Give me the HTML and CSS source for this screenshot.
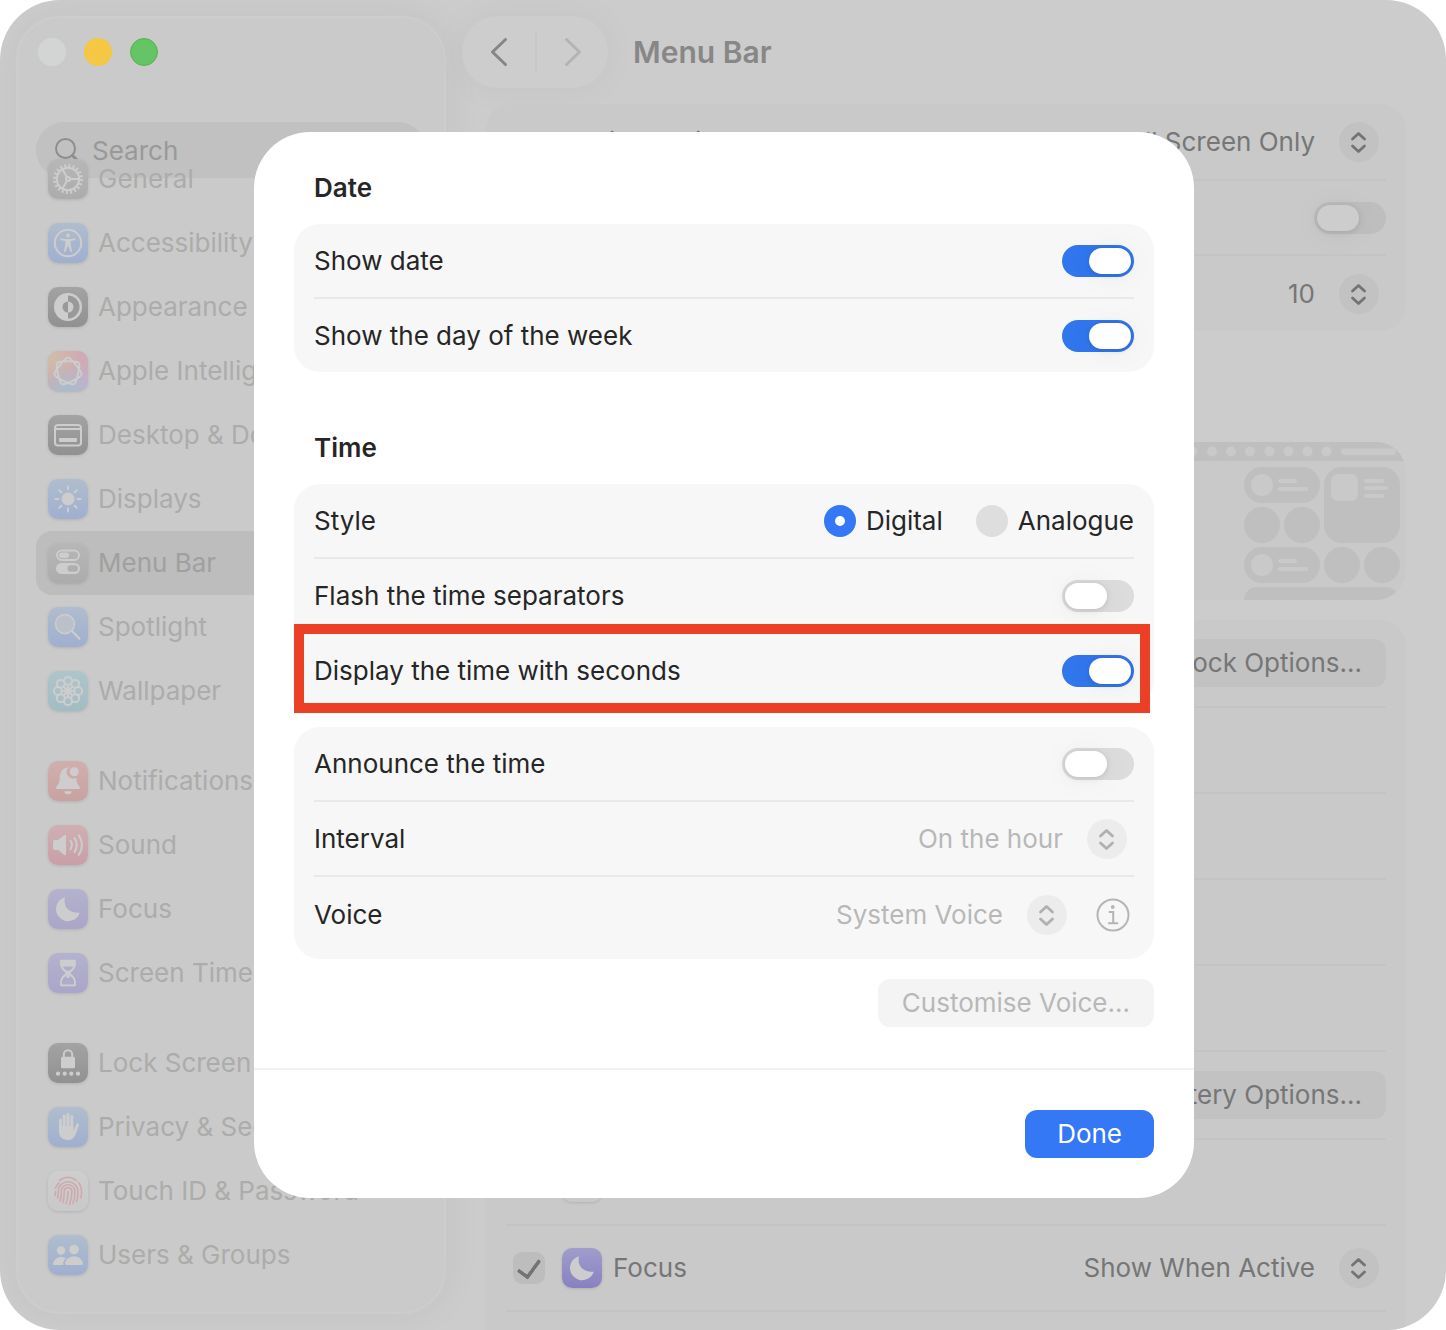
FILE: index.html
```html
<!DOCTYPE html>
<html lang="en">

<head>
    <meta charset="UTF-8">
    <title>Menu Bar</title>
    <link rel="stylesheet" href="styles.css">
</head>

<body>
    <svg class="defs" width="0" height="0" aria-hidden="true">
        <symbol id="updown" viewBox="0 0 40 40">
            <circle class="disc" cx="20" cy="20" r="20" />
            <path class="line" d="M13.5 17 19.5 11.5 25.500 17M13.500 24 19.500 29.500 25.500 24" />
        </symbol>
        <symbol id="moon" viewBox="0 0 40 40">
            <path d="M17 8.200C15.200 15 18.500 24.500 31.800 23.800A12.200 12.200 0 1 1 17 8.200Z" />
        </symbol>
    </svg>
    <div class="window">
        <aside class="sidebar">
            <div class="lights">
                <button type="button" class="light close" aria-label="Close"></button>
                <button type="button" class="light minimise" aria-label="Minimise"></button>
                <button type="button" class="light zoom" aria-label="Zoom"></button>
            </div>
            <div class="search">
                <svg width="26" height="26" viewBox="0 0 26 26"><circle cx="10.500" cy="10.500" r="9.500" /><path d="M17.500 17.500 24.500 24.500" /></svg>
                <input type="search" placeholder="Search" aria-label="Search">
            </div>
            <nav class="menu">
                <ul>
                    <li><a href="#">
                        <svg class="icon gray" viewBox="0 0 40 40">
                            <circle class="s" cx="20" cy="20" r="11.200" />
                            <circle class="s teeth" cx="20" cy="20" r="13.500" stroke-dasharray="2 2.240" />
                            <circle class="s" cx="20" cy="20" r="2" />
                            <path class="s" d="M22 20h9M19 18.300 14.500 10.500M19 21.700 14.500 29.500" />
                        </svg>General</a></li>
                    <li><a href="#">
                        <svg class="icon blue" viewBox="0 0 40 40">
                            <circle class="s" cx="20" cy="20" r="13.200" />
                            <circle cx="20" cy="12.500" r="2" />
                            <path d="M12.500 15.300 18 16h4l5.500-.700.200 1.600-5 1v4l1.500 6.800-1.600.400L20.300 23h-.600l-2.300 6.100-1.600-.400 1.500-6.800v-4l-5-1Z" />
                        </svg>Accessibility</a></li>
                    <li><a href="#">
                        <svg class="icon dark" viewBox="0 0 40 40">
                            <circle cx="20" cy="20" r="14" />
                            <path class="hole" d="M20 8.500a11.500 11.500 0 0 1 0 23V25.500a5.500 5.500 0 0 0 0-11ZM20 14.500a5.500 5.500 0 0 0 0 11Z" />
                        </svg>Appearance</a></li>
                    <li><a href="#">
                        <svg class="icon rainbow" viewBox="0 0 40 40">
                            <path class="s" d="M11.950 14.100C20 4 20 4 28.050 14.100S36.100 24.200 24.450 29.800 12.800 35.400 9.950 22.800 7.100 10.200 20 10.200 32.900 10.200 30.050 22.800 27.200 35.400 15.550 29.800 3.900 24.200 11.950 14.100Z" />
                        </svg>Apple Intelligence</a></li>
                    <li><a href="#">
                        <svg class="icon dark" viewBox="0 0 40 40">
                            <rect class="s" x="7" y="10" width="26" height="20.500" rx="3" />
                            <path class="s" d="M7.500 14h25" />
                            <rect x="11" y="23" width="18" height="4" rx="1" />
                        </svg>Desktop &amp; Dock</a></li>
                    <li><a href="#">
                        <svg class="icon blue" viewBox="0 0 40 40">
                            <circle cx="20" cy="20" r="6.500" />
                            <path class="s" d="M20 7.500v3M20 29.500v3M7.500 20h3M29.500 20h3M11.200 11.200l2.100 2.100M26.700 26.700l2.100 2.100M11.200 28.800l2.100-2.100M26.700 13.300l2.100-2.100" />
                        </svg>Displays</a></li>
                    <li><a href="#" class="current">
                        <svg class="icon gray" viewBox="0 0 40 40">
                            <rect class="s" x="9" y="7.500" width="22" height="9.500" rx="4.750" />
                            <rect x="11" y="9.500" width="10" height="5.500" rx="2.750" />
                            <rect x="8" y="20" width="24" height="11" rx="5.500" />
                            <rect class="hole" x="19.500" y="22.200" width="10.500" height="6.600" rx="3.300" />
                        </svg>Menu Bar</a></li>
                    <li><a href="#">
                        <svg class="icon blue" viewBox="0 0 40 40">
                            <circle class="lens" cx="17" cy="17" r="9.500" />
                            <path class="s" d="M24.500 24.500 31.500 31.800" />
                        </svg>Spotlight</a></li>
                    <li><a href="#">
                        <svg class="icon teal" viewBox="0 0 40 40">
                            <g class="s">
                                <circle cx="20" cy="9.800" r="3.900" /><circle cx="27.200" cy="12.800" r="3.900" />
                                <circle cx="30.200" cy="20" r="3.900" /><circle cx="27.200" cy="27.200" r="3.900" />
                                <circle cx="20" cy="30.200" r="3.900" /><circle cx="12.800" cy="27.200" r="3.900" />
                                <circle cx="9.800" cy="20" r="3.900" /><circle cx="12.800" cy="12.800" r="3.900" />
                                <circle cx="20" cy="20" r="2.500" />
                                <path d="M20 14v12M14 20h12M15.700 15.700l8.600 8.600M15.700 24.300l8.600-8.600" />
                            </g>
                        </svg>Wallpaper</a></li>
                </ul>
                <ul>
                    <li><a href="#">
                        <svg class="icon red" viewBox="0 0 40 40">
                            <path d="M20.500 6.500a6.500 6.500 0 0 0 7.800 10.200c.200 5 1.200 6.300 3.200 8.800 1 1.300.500 2.500-1 2.500h-21c-1.500 0-2-1.200-1-2.500 2.500-3 3-4.500 3.200-9 .300-5.500 3.300-10.300 8.800-10ZM16.300 30.300h7.400a3.700 3 0 0 1-7.400 0Z" />
                            <circle cx="26.300" cy="10.800" r="4.500" />
                        </svg>Notifications</a></li>
                    <li><a href="#">
                        <svg class="icon pink" viewBox="0 0 40 40">
                            <path d="M5 17q0-2 2-2h3l6-4.800q2-1.200 2 .800v18q0 2-2 .800L10 25H7q-2 0-2-2Z" />
                            <path class="s" d="M22.500 15.800q2.800 4.200 0 8.400M26.500 13q4.500 7 0 14M30.800 10.200q6.400 9.800 0 19.600" />
                        </svg>Sound</a></li>
                    <li><a href="#">
                        <svg class="icon purple" viewBox="0 0 40 40"><use href="#moon" /></svg>Focus</a></li>
                    <li><a href="#">
                        <svg class="icon purple" viewBox="0 0 40 40">
                            <path class="s" d="M13 7.800h14c.500 6.500-1.500 8-5.200 11v2.400c3.700 3 5.700 4.500 5.200 11H13c-.500-6.500 1.500-8 5.200-11v-2.400c-3.700-3-5.700-4.500-5.200-11Z" />
                            <path d="M13 7h14v6.800H13ZM18.500 17h3v8h-3Z" />
                            <path class="hole" d="M15.800 13.800h8.400L20 18.200ZM14.500 31.200q0-2.200 5.500-5.700 5.500 3.500 5.500 5.700Z" />
                        </svg>Screen Time</a></li>
                </ul>
                <ul>
                    <li><a href="#">
                        <svg class="icon dark" viewBox="0 0 40 40">
                            <rect x="13" y="13.800" width="14" height="11.400" rx="1.500" />
                            <path class="s" d="M15.800 14v-2.500a4.200 4.200 0 0 1 8.400 0V14" />
                            <circle cx="10" cy="30.700" r="2.100" /><circle cx="16.700" cy="30.700" r="2.100" />
                            <circle cx="23.300" cy="30.700" r="2.100" /><circle cx="30" cy="30.700" r="2.100" />
                        </svg>Lock Screen</a></li>
                    <li><a href="#">
                        <svg class="icon blue" viewBox="0 0 40 40">
                            <path class="hand" d="M12.500 24V13M16.200 19V9M20 19V7.500M23.800 19V9.500M27 24.500 29.500 18" />
                            <path d="M11 18.500 15 19h10.500v4.500l2.500-3 1.500 1C27.500 28 26.500 33 20 33c-6 0-9-3.500-9-9Z" />
                        </svg>Privacy &amp; Security</a></li>
                    <li><a href="#">
                        <svg class="icon white" viewBox="0 0 40 40">
                            <path class="print" d="M11.500 9.500q8.500-6.500 17 0M7.500 17q1.500-3.500 3.500-5M30.500 11.500q3.500 4 3 11.500-.200 2.500-1 4M7 24.500q.500-2 .500-4M9.500 27q1-2.500.800-6.500c.200-13 19.500-13 19.700.5q0 5-1.500 9.500M12 30q1.500-4.500 1.200-9.500c.300-9 13.500-9 13.700.5q.100 6-2 11.300M14.800 31.500Q16.500 26 16.200 20.500c.200-5 7.500-5 7.700.5q0 6-2.400 12.500M18 32.500Q20.200 27 20 20.500" />
                        </svg>Touch ID &amp; Password</a></li>
                    <li><a href="#">
                        <svg class="icon blue" viewBox="0 0 40 40">
                            <circle cx="13" cy="15.500" r="4.200" /><circle cx="26" cy="14.500" r="4.800" />
                            <path d="M15.500 30H6q-1.500 0-1-1.800C6.500 24 9.500 22 13 22q2.500 0 4.800 1.200C15.500 25.500 14.800 28 15.500 30ZM18.500 30q-2 0-1.500-2C18 24 21.500 21.500 26 21.500s8 2.500 9 6.500q.500 2-1.500 2Z" />
                        </svg>Users &amp; Groups</a></li>
                </ul>
            </nav>
        </aside>

        <main class="content">
            <header class="toolbar">
                <div class="history">
                    <button type="button" aria-label="Back"><svg width="18" height="30" viewBox="0 0 18 30"><path d="M15.500 2.500 2.500 15 15.500 27.500" /></svg></button>
                    <button type="button" aria-label="Forward" disabled><svg width="18" height="30" viewBox="0 0 18 30"><path d="M2.500 2.500 15.500 15 2.500 27.500" /></svg></button>
                </div>
                <h1>Menu Bar</h1>
            </header>

            <section class="card general">
                <div class="row">
                    <label for="autohide">Automatically hide and show the menu bar</label>
                    <span class="popup">
                        <select id="autohide"><option>In Full Screen Only</option></select>
                        <svg width="40" height="40"><use href="#updown" /></svg>
                    </span>
                </div>
                <div class="row end">
                    <input type="checkbox" class="switch" aria-label="Show menu bar background">
                </div>
                <div class="row end">
                    <span class="popup">
                        <select aria-label="Recent items"><option>10</option></select>
                        <svg width="40" height="40"><use href="#updown" /></svg>
                    </span>
                </div>
            </section>

            <div class="preview">
                <svg width="220" height="158" viewBox="0 0 220 158">
                    <g class="lighter">
                        <circle cx="6.500" cy="9.500" r="5" /><circle cx="26" cy="9.500" r="5" /><circle cx="45" cy="9.500" r="5" />
                        <circle cx="64" cy="9.500" r="5" /><circle cx="83.500" cy="9.500" r="5" /><circle cx="102.500" cy="9.500" r="5" />
                        <circle cx="121.500" cy="9.500" r="5" /><circle cx="140.500" cy="9.500" r="5" />
                        <rect x="155" y="6.500" width="55" height="6.500" rx="3.250" />
                    </g>
                    <g class="darker">
                        <rect x="58" y="25" width="76" height="36" rx="18" /><rect x="138" y="25" width="76" height="76" rx="18" />
                        <circle cx="76" cy="83" r="18" /><circle cx="116" cy="83" r="18" />
                        <rect x="58" y="105" width="76" height="36" rx="18" />
                        <circle cx="156" cy="123" r="18" /><circle cx="196" cy="123" r="18" />
                        <rect x="58" y="145" width="155" height="30" rx="13" />
                    </g>
                    <g class="lighter">
                        <circle cx="76" cy="43" r="11" /><rect x="92" y="37" width="19" height="4" rx="2" /><rect x="92" y="45" width="30" height="4" rx="2" />
                        <circle cx="76" cy="123" r="11" /><rect x="92" y="117" width="19" height="4" rx="2" /><rect x="92" y="125" width="30" height="4" rx="2" />
                        <rect x="145" y="32" width="27" height="27" rx="7" />
                        <rect x="178" y="37" width="20" height="4" rx="2" /><rect x="178" y="44" width="24" height="4" rx="2" /><rect x="178" y="52" width="20" height="4" rx="2" />
                    </g>
                </svg>
            </div>

            <section class="card items">
                <div class="row end"><button type="button" class="button">Clock Options…</button></div>
                <div class="row"></div>
                <div class="row"></div>
                <div class="row"></div>
                <div class="row"></div>
                <div class="row end"><button type="button" class="button">Battery Options…</button></div>
                <div class="row">
                    <span class="item">
                        <input type="checkbox" class="tick" aria-label="Show in menu bar">
                        <svg class="icon white" viewBox="0 0 40 40"></svg>
                    </span>
                </div>
                <div class="row">
                    <span class="item">
                        <input type="checkbox" class="tick" id="focus" checked>
                        <svg class="icon violet" viewBox="0 0 40 40"><use href="#moon" /></svg>
                        <label for="focus">Focus</label>
                    </span>
                    <span class="popup">
                        <select aria-label="Show Focus"><option>Show When Active</option></select>
                        <svg width="40" height="40"><use href="#updown" /></svg>
                    </span>
                </div>
            </section>
        </main>

        <div class="overlay">
            <form class="dialog" role="dialog" aria-label="Clock Options">
                <div class="dialog-body">
                    <h2>Date</h2>
                    <section class="card">
                        <div class="row">
                            <label for="show-date">Show date</label>
                            <input type="checkbox" class="switch" id="show-date" checked>
                        </div>
                        <div class="row">
                            <label for="show-day">Show the day of the week</label>
                            <input type="checkbox" class="switch" id="show-day" checked>
                        </div>
                    </section>

                    <h2>Time</h2>
                    <section class="card">
                        <div class="row">
                            <span>Style</span>
                            <span class="radios">
                                <label><input type="radio" name="style" checked>Digital</label>
                                <label><input type="radio" name="style">Analogue</label>
                            </span>
                        </div>
                        <div class="row">
                            <label for="flash">Flash the time separators</label>
                            <input type="checkbox" class="switch" id="flash">
                        </div>
                        <div class="row marked">
                            <label for="seconds">Display the time with seconds</label>
                            <input type="checkbox" class="switch" id="seconds" checked>
                        </div>
                    </section>

                    <section class="card">
                        <div class="row">
                            <label for="announce">Announce the time</label>
                            <input type="checkbox" class="switch" id="announce">
                        </div>
                        <div class="row">
                            <label for="interval">Interval</label>
                            <span class="popup">
                                <select id="interval" disabled><option>On the hour</option></select>
                                <svg width="40" height="40"><use href="#updown" /></svg>
                            </span>
                        </div>
                        <div class="row">
                            <label for="voice">Voice</label>
                            <span class="voice">
                                <span class="popup">
                                    <select id="voice" disabled><option>System Voice</option></select>
                                    <svg width="40" height="40"><use href="#updown" /></svg>
                                </span>
                                <button type="button" class="info" aria-label="Voice info" disabled>
                                    <svg width="34" height="34" viewBox="0 0 34 34">
                                        <circle cx="17" cy="17" r="15.500" />
                                        <path d="M13.500 14h3.700v11M12.800 25.200h8.600" /><circle class="dot" cx="16.800" cy="9" r="1.900" />
                                    </svg>
                                </button>
                            </span>
                        </div>
                    </section>
                    <div class="extra">
                        <button type="button" class="button" disabled>Customise Voice…</button>
                    </div>
                </div>
                <footer>
                    <button type="button" class="button primary">Done</button>
                </footer>
            </form>
        </div>
    </div>
</body>

</html>
```
FILE: styles.css
```css
* {
    box-sizing: border-box;
    margin: 0;
    padding: 0;
}

body {
    background-color: #fff;
    font-family: Inter, "Liberation Sans", sans-serif;
    font-size: 26px;
    line-height: 32px;
    color: #767676;
}

button,
input,
select {
    font: inherit;
    color: inherit;
    border: 0;
    background: none;
    appearance: none;
    opacity: 1;
}

ul {
    list-style: none;
}

a {
    color: inherit;
    text-decoration: none;
}

.defs {
    position: absolute;
}

.window {
    position: relative;
    display: flex;
    min-height: 100vh;
    border-radius: 60px;
    overflow: hidden;
    background-color: #ccc;
}

/* sidebar */
.sidebar {
    flex: none;
    width: 430px;
    margin: 16px 0 16px 16px;
    padding: 20px 18px;
    border: 2px solid #cdcdcd;
    border-radius: 44px;
    background-color: #cacaca;
    box-shadow: 0 0 40px rgba(0, 0, 0, .05);
}

.lights {
    display: flex;
    gap: 18px;
    padding: 0 2px;
}

.light {
    width: 28px;
    height: 28px;
    border-radius: 50%;
}

.close {
    background-color: #d3d5d5;
}

.minimise {
    background-color: #f4c843;
}

.zoom {
    background-color: #65c466;
    border: 1px solid #53b549;
}

.search {
    display: flex;
    align-items: center;
    gap: 11px;
    height: 56px;
    margin-top: 56px;
    padding: 2px 20px 0 19px;
    border-radius: 28px;
    background-color: #c1c1c1;
    color: #999;
}

.search svg {
    flex: none;
    fill: none;
    stroke: #8e8e8e;
    stroke-width: 2;
    stroke-linecap: round;
}

.search path {
    stroke-width: 3;
}

.search input {
    width: 100%;
}

.search input::placeholder {
    color: #999;
}

/* the list is scrolled a little way under the search field */
.menu {
    display: grid;
    gap: 26px;
    margin-top: -31px;
    color: #acacaa;
}

.menu a {
    display: flex;
    align-items: center;
    gap: 10px;
    height: 64px;
    padding: 0 12px;
    border-radius: 16px;
    white-space: nowrap;
}

.menu .current {
    background-color: #bdbdbd;
    color: #a0a09e;
}

.icon {
    flex: none;
    width: 40px;
    height: 40px;
    border-radius: 10px;
    fill: #cdcdcd;
    box-shadow: 0 1px 3px rgba(0, 0, 0, .12);
}

.icon .s {
    fill: none;
    stroke: #cdcdcd;
    stroke-width: 2;
    stroke-linecap: round;
    stroke-linejoin: round;
}

.icon .teeth {
    stroke-width: 3;
    stroke-linecap: butt;
}

.icon .hole {
    fill: #999;
}

.icon .lens {
    fill: #bbc1ca;
    stroke: #cdcdcd;
    stroke-width: 1.5;
}

.icon .hand {
    fill: none;
    stroke: #cdcdcd;
    stroke-width: 3;
    stroke-linecap: round;
}

.icon .print {
    fill: none;
    stroke: #cfa9ad;
    stroke-width: 1.6;
    stroke-linecap: round;
}

.gray {
    background: linear-gradient(#b7b7b7, #acacac);
}

.gray .hole {
    fill: #afafaf;
}

.dark {
    background: linear-gradient(#a3a3a3, #919191);
}

.blue {
    background: linear-gradient(#afbdcd, #a0afcf);
}

.teal {
    background: linear-gradient(#aec5cc, #a3bbc2);
}

.red {
    background: linear-gradient(#cfb0af, #c8a2a0);
}

.pink {
    background: linear-gradient(#ceb0b3, #c99fa7);
}

.purple {
    background: linear-gradient(#b4b2cd, #aaa5c9);
}

.purple .hole {
    fill: #aeabcb;
}

.violet {
    background: linear-gradient(#a09dcc, #8881c0);
}

.white {
    background: linear-gradient(#cecece, #c9c9c9);
}

.rainbow {
    background:
        radial-gradient(circle at 45% 105%, #a3bfd0, transparent 60%),
        radial-gradient(circle at 0 10%, #d0bfa4, transparent 60%),
        radial-gradient(circle at 100% 90%, #c2b0d0, transparent 50%),
        #cfabb3;
}

/* settings pane behind the dialog */
.content {
    flex: 1;
    display: flex;
    flex-direction: column;
    min-width: 0;
    padding: 16px 40px 0;
}

.toolbar {
    display: flex;
    align-items: center;
    gap: 25px;
    margin: 0 0 16px -24px;
}

.toolbar h1 {
    font-size: 30px;
    font-weight: 600;
    color: #878787;
}

.history {
    display: flex;
    align-items: center;
    height: 72px;
    border-radius: 36px;
    background-color: #cdcdcd;
    box-shadow: 0 0 40px rgba(0, 0, 0, .04);
}

.history button {
    display: grid;
    place-items: center;
    width: 73px;
    height: 40px;
}

.history button + button {
    border-left: 2px solid #c8c8c8;
}

.history svg {
    fill: none;
    stroke: #858585;
    stroke-width: 3;
    stroke-linecap: round;
    stroke-linejoin: round;
}

.history button:disabled svg {
    stroke: #b3b3b3;
}

.card {
    padding: 0 20px;
    border-radius: 26px;
    background-color: #c9c9c9;
}

.row {
    display: flex;
    align-items: center;
    justify-content: space-between;
    height: 75px;
    border-bottom: 2px solid #c4c4c4;
    white-space: nowrap;
}

.row:last-child {
    border-bottom: 0;
}

.row.end {
    justify-content: flex-end;
}

.general .row:first-child {
    height: 77px;
}

.popup {
    display: flex;
    align-items: center;
    gap: 24px;
    margin-right: 7px;
}

.popup svg {
    flex: none;
    fill: #c2c2c2;
    stroke: #747474;
}

.popup select {
    text-align-last: right;
}

.disc {
    stroke: none;
}

.line {
    fill: none;
    stroke-width: 2.8;
    stroke-linecap: round;
    stroke-linejoin: round;
}

.switch {
    flex: none;
    display: flex;
    width: 72px;
    height: 32px;
    padding: 3px;
    border-radius: 16px;
    background-color: #bebebe;
}

.switch::before {
    content: "";
    width: 42px;
    height: 26px;
    border-radius: 13px;
    background-color: #cdcdcd;
    box-shadow: 0 1px 6px rgba(0, 0, 0, .12), 0 2px 32px rgba(0, 0, 0, .05);
}

.switch:checked {
    justify-content: flex-end;
    background-color: #3276ee;
}

.button {
    height: 48px;
    padding: 0 24px;
    border-radius: 12px;
    background-color: #c2c2c2;
}

.preview {
    display: flex;
    justify-content: flex-end;
    margin: 111px 0 20px;
    border-radius: 30px;
    overflow: hidden;
    background: linear-gradient(#bfbfbf 19px, #c9c9c9 19px);
}

.lighter {
    fill: #c9c9c9;
}

.darker {
    fill: #bfbfbf;
}

.items {
    flex: 1;
    border-radius: 26px 26px 0 0;
}

.items .row {
    height: 86px;
    border-bottom: 2px solid #c4c4c4;
}

.items .row.end {
    height: 88px;
}

.item {
    display: flex;
    align-items: center;
    gap: 17px;
    padding-left: 7px;
}

.item label {
    margin-left: -6px;
}

.tick {
    width: 32px;
    height: 32px;
    border-radius: 9px;
    background-color: #bdbdbd;
    display: grid;
    place-items: center;
}

.tick:checked::before {
    content: "";
    width: 10px;
    height: 19px;
    margin-bottom: 4px;
    border: solid #747474;
    border-width: 0 4px 4px 0;
    border-radius: 2px;
    transform: rotate(36deg);
}

/* dialog */
.overlay {
    position: absolute;
    inset: 0;
    display: grid;
    place-items: center;
    padding-left: 2px;
}

.dialog {
    width: 940px;
    max-width: 90%;
    border-radius: 56px;
    background-color: #fff;
    color: #262626;
}

.dialog-body {
    padding: 40px 40px 41px;
}

.dialog h2 {
    margin: 0 0 20px 20px;
    font-size: 26px;
    font-weight: 600;
}

.dialog .card {
    background-color: #f7f7f7;
}

.dialog .card + h2 {
    margin-top: 60px;
}

.dialog .card + .card {
    margin-top: 20px;
}

.dialog .row {
    border-color: #e9e9e9;
}

.dialog .row:last-child {
    height: 73px;
}

.dialog .card + .card .row:last-child {
    height: 82px;
    padding-bottom: 6px;
}

.dialog .switch:not(:checked) {
    background-color: #dcdcdc;
}

.dialog .switch::before {
    background-color: #fff;
}

.dialog .popup svg {
    fill: #ececec;
    stroke: #b0b0b0;
}

.dialog select {
    color: #b8b8b8;
}

.radios,
.radios label {
    display: flex;
    align-items: center;
}

.radios {
    gap: 33px;
}

.radios label {
    gap: 10px;
}

.radios input {
    display: grid;
    place-items: center;
    width: 32px;
    height: 32px;
    border-radius: 50%;
    background-color: #dedede;
}

.radios input:checked {
    background-color: #3478f6;
}

.radios input:checked::before {
    content: "";
    width: 10px;
    height: 10px;
    border-radius: 50%;
    background-color: #fff;
}

.marked {
    position: relative;
}

.marked::after {
    content: "";
    position: absolute;
    inset: -10px -16px -6px -20px;
    border: 10px solid #eb4026;
    pointer-events: none;
}

.voice {
    display: flex;
    align-items: center;
    gap: 22px;
    margin-right: 4px;
}

.info {
    display: flex;
}

.info svg {
    fill: none;
    stroke: #b5b5b5;
    stroke-width: 2;
    stroke-linecap: round;
}

.info .dot {
    fill: #b5b5b5;
    stroke: none;
}

.extra {
    display: flex;
    justify-content: flex-end;
    margin-top: 20px;
}

.dialog .button {
    background-color: #f4f4f4;
    color: #b8b8b8;
}

.dialog footer {
    display: flex;
    justify-content: flex-end;
    padding: 40px;
    border-top: 2px solid #f2f2f2;
}

.dialog .primary {
    padding: 0 32px;
    background-color: #3478f6;
    color: #fff;
}
```
